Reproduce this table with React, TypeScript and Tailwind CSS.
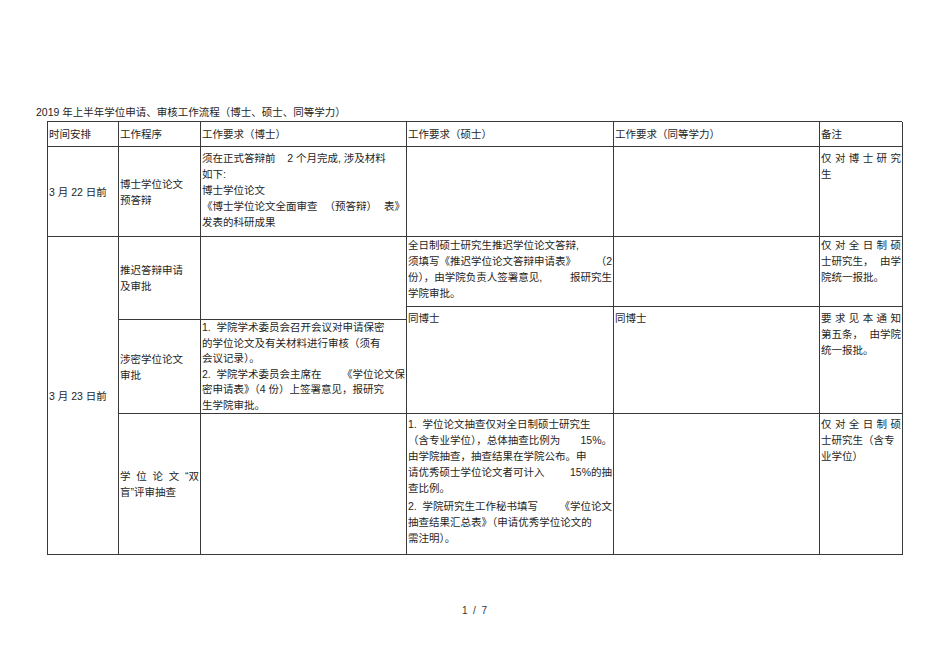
import React from "react";

const cell = "border-r border-b border-[#3a3a3a] pl-[1px] overflow-hidden";

function Lines({ lines, className = "" }: { lines: (string | string[])[]; className?: string }) {
  return (
    <div className={className}>
      {lines.map((l, i) =>
        Array.isArray(l) ? (
          <div key={i} className="flex justify-between whitespace-pre pr-[1px]">
            {l.map((p, j) => (
              <span key={j}>{p}</span>
            ))}
          </div>
        ) : (
          <div key={i} className="whitespace-pre">
            {l}
          </div>
        )
      )}
    </div>
  );
}

export default function App() {
  return (
    <div className="w-[950px] h-[672px] bg-white text-[#1e1e1e] text-[10.5px] leading-[16px] font-['Liberation_Sans','Noto_Sans_CJK_SC',sans-serif]">
      <div className="pt-[104px] pl-[36px] h-[120px]">
        2019 年上半年学位申请、审核工作流程（博士、硕士、同等学力）
      </div>

      <div className="ml-[47px] mt-[1px] w-[855px] grid grid-cols-[71px_82px_206px_207px_206px_83px] grid-rows-[25px_90px_70px_13px_94px_141px] border-l border-t border-[#3a3a3a]">
        {/* 表头 */}
        {["时间安排", "工作程序", "工作要求（博士）", "工作要求（硕士）", "工作要求（同等学力）", "备注"].map((h) => (
          <div key={h} className={`${cell} row-start-1 flex items-center`}>
            {h}
          </div>
        ))}

        {/* 3月22日前 */}
        <div className={`${cell} col-start-1 row-start-2 flex items-center pl-0`}>3 月 22 日前</div>
        <div className={`${cell} col-start-2 row-start-2 flex items-center`}>
          <Lines lines={["博士学位论文", "预答辩"]} />
        </div>
        <div className={`${cell} col-start-3 row-start-2 pt-[3px]`}>
          <Lines
            lines={[
              "须在正式答辩前    2 个月完成, 涉及材料",
              "如下:",
              "博士学位论文",
              ["《博士学位论文全面审查", "（预答辩）", "表》"],
              "发表的科研成果",
            ]}
          />
        </div>
        <div className={`${cell} col-start-4 row-start-2`} />
        <div className={`${cell} col-start-5 row-start-2`} />
        <div className={`${cell} col-start-6 row-start-2 pt-[3px]`}>
          <Lines lines={[["仅", "对", "博", "士", "研", "究"], "生"]} />
        </div>

        {/* 3月23日前 */}
        <div className={`${cell} col-start-1 row-start-3 row-span-4 flex items-center pl-0`}>3 月 23 日前</div>

        <div className={`${cell} col-start-2 row-start-3 row-span-2 flex items-center`}>
          <Lines lines={["推迟答辩申请", "及审批"]} />
        </div>
        <div className={`${cell} col-start-3 row-start-3 row-span-2`} />
        <div className={`${cell} col-start-4 row-start-3`}>
          <Lines
            lines={[
              "全日制硕士研究生推迟学位论文答辩,",
              ["须填写《推迟学位论文答辩申请表》", "（2"],
              ["份），由学院负责人签署意见,", "报研究生"],
              "学院审批。",
            ]}
          />
        </div>
        <div className={`${cell} col-start-5 row-start-3`} />
        <div className={`${cell} col-start-6 row-start-3`}>
          <Lines lines={[["仅", "对", "全", "日", "制", "硕"], ["士研究生，", "由学"], "院统一报批。"]} />
        </div>

        <div className={`${cell} col-start-2 row-start-5 flex items-center`}>
          <Lines lines={["涉密学位论文", "审批"]} />
        </div>
        <div className={`${cell} col-start-3 row-start-5 leading-[15.5px]`}>
          <Lines
            lines={[
              "1.  学院学术委员会召开会议对申请保密",
              "的学位论文及有关材料进行审核（须有",
              "会议记录）。",
              ["2.  学院学术委员会主席在", "《学位论文保"],
              "密申请表》（4 份）上签署意见，报研究",
              "生学院审批。",
            ]}
          />
        </div>
        <div className={`${cell} col-start-4 row-start-4 row-span-2 pt-[3px]`}>同博士</div>
        <div className={`${cell} col-start-5 row-start-4 row-span-2 pt-[3px]`}>同博士</div>
        <div className={`${cell} col-start-6 row-start-4 row-span-2 pt-[3px]`}>
          <Lines lines={[["要", "求", "见", "本", "通", "知"], ["第五条，", "由学院"], "统一报批。"]} />
        </div>

        <div className={`${cell} col-start-2 row-start-6 flex items-center`}>
          <Lines className="w-full" lines={[["学", "位", "论", "文", "“双"], "盲”评审抽查"]} />
        </div>
        <div className={`${cell} col-start-3 row-start-6`} />
        <div className={`${cell} col-start-4 row-start-6 pt-[2px]`}>
          <Lines
            lines={[
              "1.  学位论文抽查仅对全日制硕士研究生",
              ["（含专业学位），总体抽查比例为", "15%。"],
              "由学院抽查，抽查结果在学院公布。申",
              ["请优秀硕士学位论文者可计入", "15%的抽"],
              "查比例。",
            ]}
          />
          <Lines
            className="mt-[2px]"
            lines={[["2.  学院研究生工作秘书填写", "《学位论文"], "抽查结果汇总表》（申请优秀学位论文的", "需注明）。"]}
          />
        </div>
        <div className={`${cell} col-start-5 row-start-6`} />
        <div className={`${cell} col-start-6 row-start-6 pt-[2px]`}>
          <Lines lines={[["仅", "对", "全", "日", "制", "硕"], "士研究生（含专", "业学位）"]} />
        </div>
      </div>

      <div className="mt-[49px] text-center text-[10px] leading-[14px] text-[#333] whitespace-pre pr-[1px]">
        {"1  /  7"}
      </div>
    </div>
  );
}
